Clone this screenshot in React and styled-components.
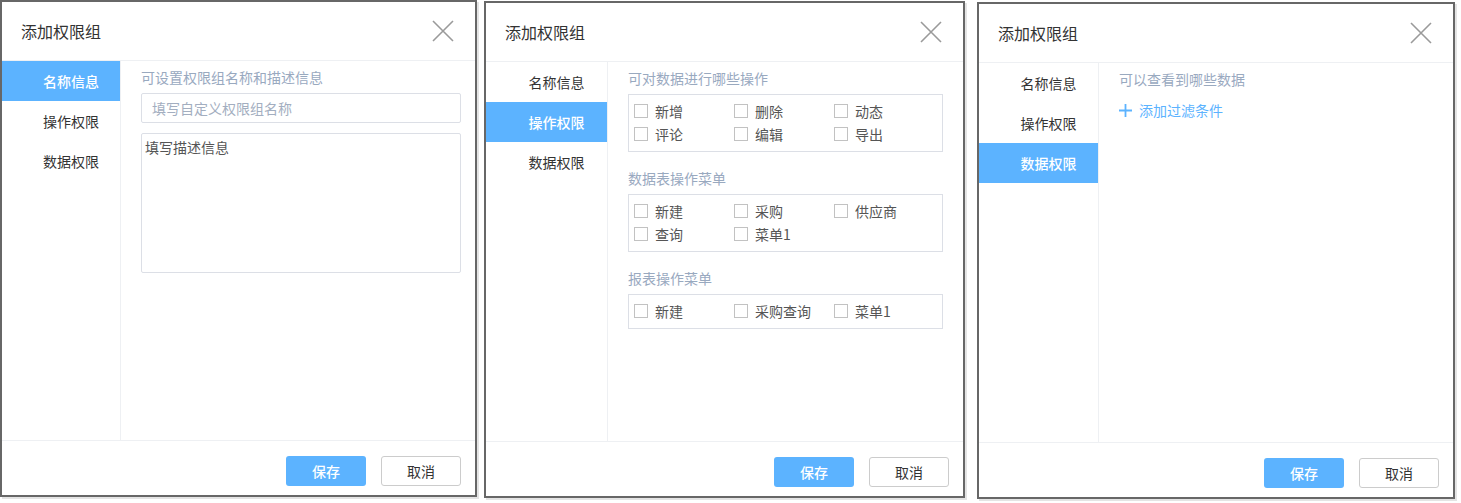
import React from 'react';
import styled, { createGlobalStyle } from 'styled-components';

const GlobalStyle = createGlobalStyle`
  body {
    margin: 0;
    background: #ffffff;
    font-family: "Noto Sans CJK SC", "Noto Sans", sans-serif;
  }
  * { box-sizing: border-box; }
`

const NAV = ['名称信息', '操作权限', '数据权限']

const OPS = ['新增', '删除', '动态', '评论', '编辑', '导出']
const TABLE_MENU = ['新建', '采购', '供应商', '查询', '菜单1']
const REPORT_MENU = ['新建', '采购查询', '菜单1']

function CloseIcon() {
    return (
        <svg width="22" height="22" viewBox="0 0 22 22">
            <path d="M1 1 L21 21 M21 1 L1 21" stroke="#9a9a9a" strokeWidth="1.6" fill="none" />
        </svg>
    )
}

function PlusIcon() {
    return (
        <svg width="13" height="13" viewBox="0 0 13 13">
            <path d="M6.5 0 V13 M0 6.5 H13" stroke="#5cb3ff" strokeWidth="1.8" fill="none" />
        </svg>
    )
}

function CheckList({ items }) {
    return (
        <CheckGroup>
            {items.map((name) => (
                <CheckItem key={name}>
                    <CheckBox />
                    <span>{name}</span>
                </CheckItem>
            ))}
        </CheckGroup>
    )
}

function PermissionDialog({ active, width, side, gap, top, padRight, children }) {
    return (
        <Dialog $w={width} $gap={gap} $top={top}>
            <Header>
                <Title>添加权限组</Title>
                <CloseIcon />
            </Header>
            <Body>
                <Sidebar $w={side}>
                    {NAV.map((name, i) => (
                        <NavItem key={name} $active={i === active}>{name}</NavItem>
                    ))}
                </Sidebar>
                <Content $pr={padRight}>{children}</Content>
            </Body>
            <Footer>
                <Button $primary>保存</Button>
                <Button>取消</Button>
            </Footer>
        </Dialog>
    )
}

export default function App() {
    return (
        <>
            <GlobalStyle />
            <Page>
                <PermissionDialog active={0} width={477} side={118} gap={0} top={0} padRight={14}>
                    <SectionLabel>可设置权限组名称和描述信息</SectionLabel>
                    <NameInput type="text" placeholder="填写自定义权限组名称" />
                    <DescInput placeholder="填写描述信息" />
                </PermissionDialog>

                <PermissionDialog active={1} width={481} side={121} gap={7} top={1} padRight={20}>
                    <Section>
                        <SectionLabel>可对数据进行哪些操作</SectionLabel>
                        <CheckList items={OPS} />
                    </Section>
                    <Section>
                        <SectionLabel>数据表操作菜单</SectionLabel>
                        <CheckList items={TABLE_MENU} />
                    </Section>
                    <Section>
                        <SectionLabel>报表操作菜单</SectionLabel>
                        <CheckList items={REPORT_MENU} />
                    </Section>
                </PermissionDialog>

                <PermissionDialog active={2} width={478} side={119} gap={12} top={2} padRight={20}>
                    <SectionLabel>可以查看到哪些数据</SectionLabel>
                    <AddLink>
                        <PlusIcon />
                        <span>添加过滤条件</span>
                    </AddLink>
                </PermissionDialog>
            </Page>
        </>
    )
}

const Page = styled.div`
    display: flex;
    align-items: flex-start;
    width: 1461px;
    height: 503px;
    `
const Dialog = styled.section`
    display: flex;
    flex-direction: column;
    width: ${p => p.$w}px;
    height: 497px;
    margin-left: ${p => p.$gap}px;
    margin-top: ${p => p.$top}px;
    border: 2px solid #676767;
    background: #ffffff;
    box-shadow: 2px 2px 0 #e4e4e4;
    `
const Header = styled.div`
    display: flex;
    align-items: center;
    justify-content: space-between;
    height: 59px;
    flex-shrink: 0;
    padding: 0 21px 0 19px;
    border-bottom: 1px solid #eef0f3;
    `
const Title = styled.h2`
    margin: 0;
    font-size: 16px;
    font-weight: normal;
    line-height: 20px;
    color: #333333;
    `
const Body = styled.div`
    display: flex;
    flex: 1;
    min-height: 0;
    `
const Sidebar = styled.nav`
    width: ${p => p.$w + 1}px;
    flex-shrink: 0;
    border-right: 1px solid #eef0f3;
    `
const NavItem = styled.div`
    height: 40px;
    line-height: 40px;
    padding-left: 20px;
    text-align: center;
    font-size: 14px;
    color: ${p => p.$active ? '#ffffff' : '#333333'};
    background: ${p => p.$active ? '#5cb3ff' : 'transparent'};
    font-weight: ${p => p.$active ? 500 : 'normal'};
    `
const Content = styled.div`
    flex: 1;
    min-width: 0;
    padding: 6px ${p => p.$pr}px 0 20px;
    `
const Section = styled.div`
    margin-bottom: 16px;
    `
const SectionLabel = styled.div`
    font-size: 14px;
    line-height: 20px;
    color: #99a9bf;
    margin-bottom: 6px;
    `
const NameInput = styled.input`
    display: block;
    width: 100%;
    height: 30px;
    padding: 0 10px;
    border: 1px solid #dcdfe6;
    border-radius: 2px;
    font-family: inherit;
    font-size: 14px;
    color: #333333;
    outline: none;
    &::placeholder { color: #a3aec0; }
    `
const DescInput = styled.textarea`
    display: block;
    width: 100%;
    height: 140px;
    margin-top: 10px;
    padding: 3px 3px;
    border: 1px solid #dcdfe6;
    border-radius: 2px;
    font-family: inherit;
    font-size: 14px;
    line-height: 20px;
    resize: none;
    outline: none;
    &::placeholder { color: #555555; }
    `
const CheckGroup = styled.div`
    display: grid;
    grid-template-columns: repeat(3, 100px);
    row-gap: 3px;
    padding: 6px 5px 7px;
    border: 1px solid #dcdfe6;
    `
const CheckItem = styled.label`
    display: flex;
    align-items: center;
    height: 20px;
    font-size: 14px;
    color: #555555;
    `
const CheckBox = styled.span`
    width: 14px;
    height: 14px;
    margin-right: 7px;
    border: 1px solid #c2c2c2;
    background: #ffffff;
    flex-shrink: 0;
    `
const AddLink = styled.div`
    display: flex;
    align-items: center;
    gap: 7px;
    margin-top: 11px;
    height: 20px;
    font-size: 14px;
    color: #5cb3ff;
    `
const Footer = styled.div`
    display: flex;
    justify-content: flex-end;
    align-items: flex-start;
    gap: 15px;
    height: 55px;
    flex-shrink: 0;
    padding: 15px 14px 0 0;
    border-top: 1px solid #eef0f3;
    `
const Button = styled.button`
    width: 80px;
    height: 30px;
    border-radius: 3px;
    font-family: inherit;
    font-size: 14px;
    font-weight: ${p => p.$primary ? 500 : 'normal'};
    color: ${p => p.$primary ? '#ffffff' : '#333333'};
    background: ${p => p.$primary ? '#5cb3ff' : '#ffffff'};
    border: ${p => p.$primary ? 'none' : '1px solid #cccccc'};
    `
